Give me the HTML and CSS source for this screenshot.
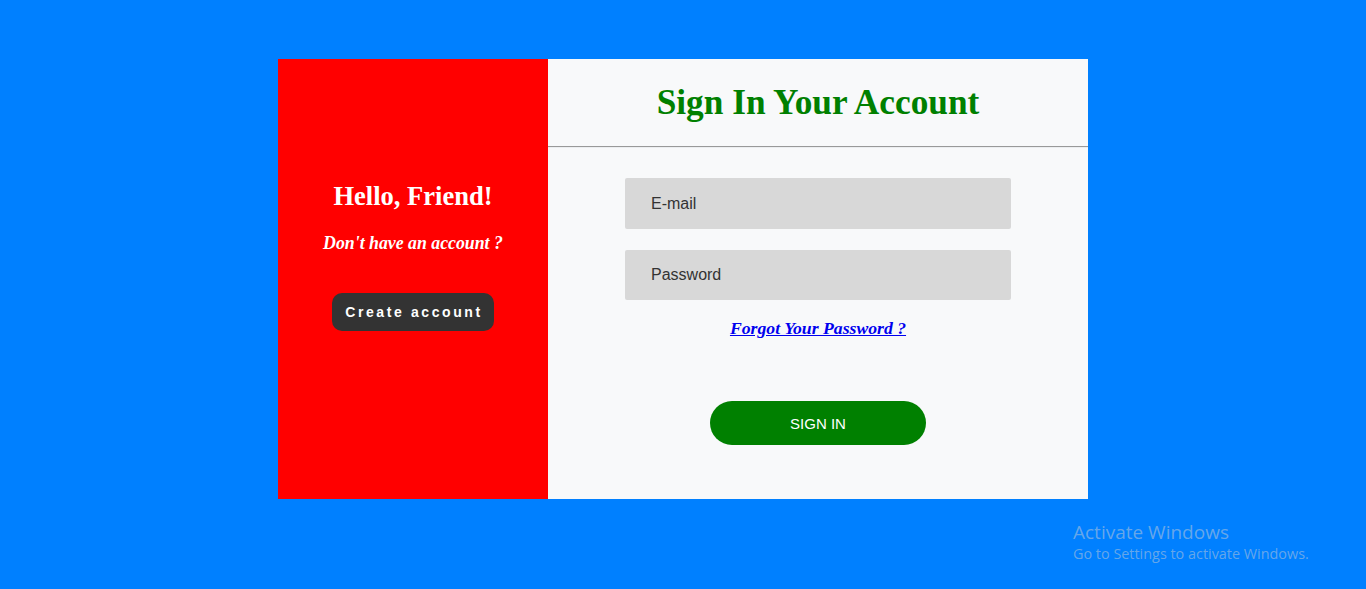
FILE: index.html
```html
<!DOCTYPE html>
<html>
<head>
<meta charset="utf-8">
<link rel="stylesheet" href="styles.css">
</head>
<body>
<div class="card">
  <div class="left">
    <h2 class="hello">Hello, Friend!</h2>
    <p class="noacc">Don't have an account ?</p>
    <button class="create">Create account</button>
  </div>
  <div class="right">
    <div class="head">
      <h1 class="title">Sign In Your Account</h1>
    </div>
    <hr class="rule">
    <form class="form">
      <input class="field" type="text" placeholder="E-mail">
      <input class="field" type="password" placeholder="Password">
      <a class="forgot" href="#">Forgot Your Password ?</a>
      <button class="signin" type="button">SIGN IN</button>
    </form>
  </div>
</div>
<div class="watermark">
  <div class="wm-title">Activate Windows</div>
  <div class="wm-sub">Go to Settings to activate Windows.</div>
</div>
</body>
</html>
```

FILE: styles.css
```css
html, body {
  margin: 0;
  padding: 0;
}
body {
  background: #0080ff;
  height: 589px;
  overflow: hidden;
  font-family: "Liberation Serif", "Times New Roman", serif;
}
.card {
  width: 810px;
  height: 440px;
  margin: 59px auto 0;
  display: flex;
}
.left {
  width: 270px;
  background: #ff0000;
  display: flex;
  flex-direction: column;
  align-items: center;
  padding-top: 122px;
  box-sizing: border-box;
  color: #fff;
}
.hello {
  margin: 0;
  font-size: 26.5px;
  line-height: 30px;
  font-weight: bold;
}
.noacc {
  margin: 21px 0 0;
  font-size: 17.8px;
  line-height: 22px;
  font-style: italic;
  font-weight: bold;
}
.create {
  margin-top: 39px;
  width: 162px;
  height: 38px;
  border: 0;
  border-radius: 10px;
  background: #333333;
  color: #fff;
  font-family: "Liberation Sans", Arial, sans-serif;
  font-size: 14px;
  font-weight: bold;
  letter-spacing: 2.6px;
  padding: 0 0 0 2px;
}
.right {
  flex: 1;
  background: #f8f9fa;
  display: flex;
  flex-direction: column;
}
.head {
  padding: 22px 0 21px;
  text-align: center;
}
.title {
  margin: 0;
  font-size: 35.3px;
  line-height: 44px;
  font-weight: bold;
  color: #008000;
}
.rule {
  margin: 0;
  border: 0;
  border-top: 1px solid #999;
  border-bottom: 1px solid #eceef0;
}
.form {
  display: flex;
  flex-direction: column;
  align-items: center;
  padding-top: 30px;
}
.field {
  width: 386px;
  height: 51px;
  box-sizing: border-box;
  border: 0;
  border-radius: 2px;
  background: #d8d8d8;
  padding: 0 26px;
  font-family: "Liberation Sans", Arial, sans-serif;
  font-size: 16px;
  color: #333;
  outline: none;
}
.field + .field {
  margin-top: 21px;
  height: 50px;
}
.field::placeholder {
  color: #333;
}
.forgot {
  margin-top: 18px;
  font-size: 17.7px;
  line-height: 20px;
  font-style: italic;
  font-weight: bold;
  color: #0000ee;
  text-decoration: underline;
}
.signin {
  margin-top: 63px;
  width: 216px;
  height: 44px;
  border: 0;
  border-radius: 22px;
  background: #008000;
  color: #fff;
  font-family: "Liberation Sans", Arial, sans-serif;
  font-size: 15px;
  padding: 0;
}
.watermark {
  position: absolute;
  left: 1073px;
  top: 520px;
  color: rgba(190, 200, 215, 0.55);
  font-family: "Open Sans", "DejaVu Sans", sans-serif;
}
.wm-title {
  font-size: 19px;
  line-height: 24px;
}
.wm-sub {
  font-size: 14.4px;
  line-height: 20px;
}
```
